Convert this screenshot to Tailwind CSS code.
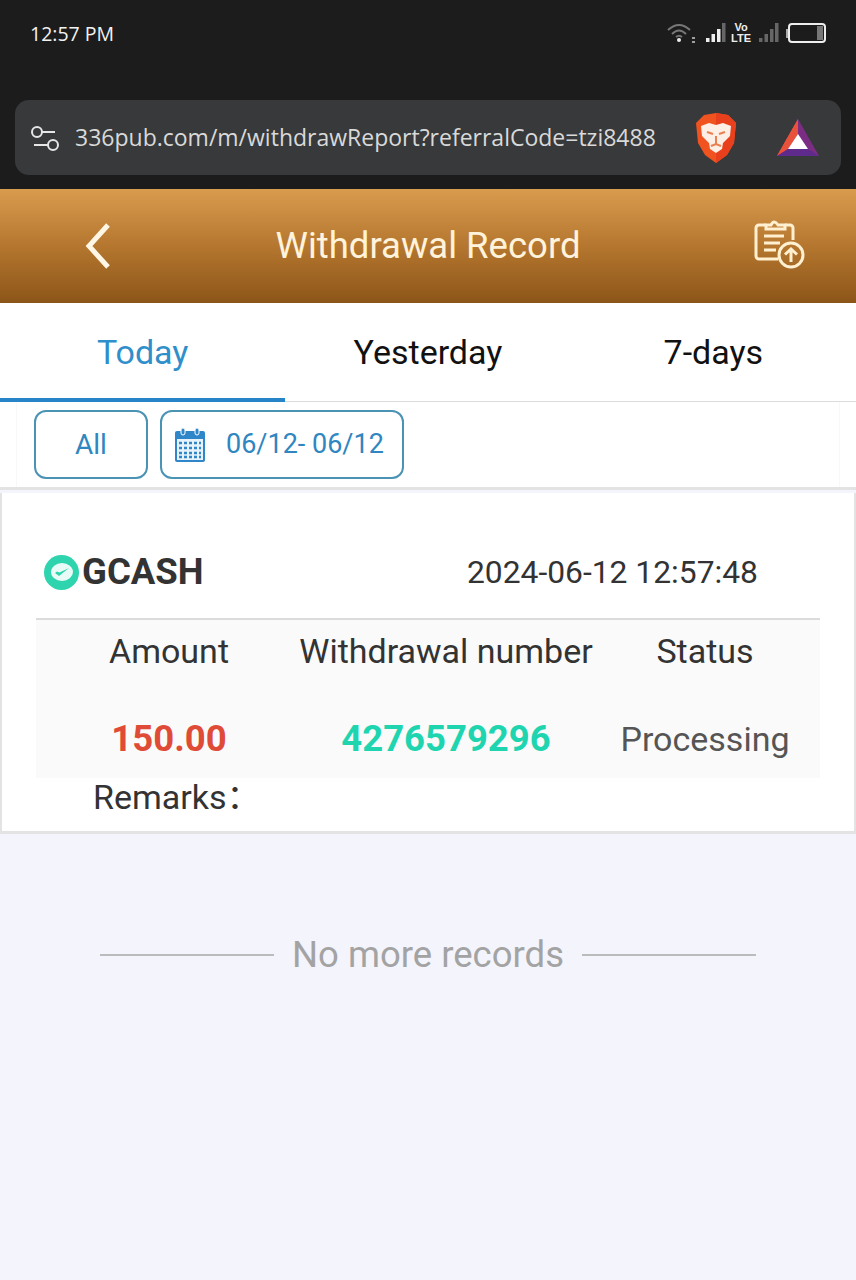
<!DOCTYPE html>
<html lang="en">
<head>
  <meta charset="UTF-8" />
  <title>Withdrawal Record</title>
  <script src="https://cdn.jsdelivr.net/npm/@tailwindcss/browser@4"></script>
</head>
<body class="bg-[#f4f4fc] font-['Roboto','Noto_Sans_CJK_SC',sans-serif] w-[856px] h-[1280px] overflow-hidden">

  <!-- browser chrome -->
  <div class="bg-[#1c1c1c] h-[189px] px-[15px] flex flex-col">
    <div class="h-[100px] flex justify-between pt-[22px]">
      <span class="text-[19.500px] leading-[24px] text-[#f2f2f2] font-['Open_Sans',sans-serif] pl-[15px]">12:57 PM</span>
      <div class="flex items-start pr-[15px]">
        <svg width="30" height="22" viewBox="0 0 30 22" fill="none" stroke="#777" stroke-width="2">
          <path d="M1 8 Q12 -2 23 8" /><path d="M5 12 Q12 5 19 12" /><path d="M9 15 Q12 12.500 15 15" />
          <circle cx="12" cy="18" r="2" fill="#eee" stroke="none" />
          <path d="M25 16h3M25 20h3" stroke="#ccc" stroke-width="1.500" />
        </svg>
        <svg width="22" height="22" viewBox="0 0 22 22" class="ml-[8px]">
          <rect x="1" y="16" width="3.500" height="4" fill="#eee" /><rect x="6.500" y="12" width="3.500" height="8" fill="#eee" /><rect x="12" y="7" width="3.500" height="13" fill="#eee" /><rect x="17" y="1" width="3.500" height="19" fill="#666" />
        </svg>
        <div class="ml-[4px] flex flex-col items-center text-[#eee] text-[11px] leading-[11px] font-bold font-['Liberation_Sans',sans-serif] w-[20px]"><span>Vo</span><span>LTE</span></div>
        <svg width="22" height="22" viewBox="0 0 22 22" class="ml-[7px]">
          <rect x="1" y="16" width="3.500" height="4" fill="#666" /><rect x="6.500" y="12" width="3.500" height="8" fill="#666" /><rect x="12" y="7" width="3.500" height="13" fill="#666" /><rect x="17" y="1" width="3.500" height="19" fill="#666" />
        </svg>
        <div class="ml-[6px] flex items-center mt-[1px]">
          <div class="w-[2px] h-[9px] bg-[#aaa]"></div>
          <div class="w-[38px] h-[20px] border-2 border-[#eee] rounded-[4px] flex justify-end p-[1px]"><div class="w-[6px] bg-[#777]"></div></div>
        </div>
      </div>
    </div>
    <div class="h-[75px] bg-[#38393b] rounded-[14px] flex items-center pl-[15px]">
      <svg width="30" height="28" viewBox="0 0 30 28" fill="none" stroke="#e6e6e6" stroke-width="2" class="shrink-0">
        <circle cx="7" cy="8" r="5" /><path d="M12 8h13" /><circle cx="23" cy="21" r="5" /><path d="M4 21h14" />
      </svg>
      <span class="ml-[15px] text-[#d9d9d9] text-[23px] font-['Open_Sans',sans-serif] w-[590px] shrink-0 whitespace-nowrap">336pub.com/m/withdrawReport?referralCode=tzi8488</span>
      <svg width="42" height="50" viewBox="0 0 42 50" class="ml-[30px] shrink-0">
        <path d="M9 2 L21 0 L33 2 L41 10 L39 30 L32 42 L21 50 L10 42 L3 30 L1 10 Z" fill="#f0531f" />
        <path d="M21 0 L33 2 L41 10 L39 30 L32 42 L21 50 Z" fill="#e8401c" />
        <path d="M6 13 L14 10 L21 12 L28 10 L36 13 L35 23 L28 30 L27 36 L21 40 L15 36 L14 30 L7 23 Z" fill="#fdeee6" />
        <path d="M12 19 L18 21 M30 19 L24 21 M21 23 V31 M16 33 L21 31 L26 33" stroke="#e8804f" stroke-width="2" fill="none" />
      </svg>
      <svg width="44" height="40" viewBox="0 0 44 40" class="ml-[39px] shrink-0">
        <path d="M22 1 L43 38 L1 38 Z" fill="#7b2d84" />
        <path d="M22 1 L12 26 L9 32 L1 38 Z" fill="#f0502e" />
        <path d="M22 1 L22 16 L12 31 L1 38 Z" fill="#e8523a" />
        <path d="M22 16 L32 31 L12 31 Z" fill="#fff" />
        <path d="M1 38 L12 31 L32 31 L43 38 Z" fill="#5e2a8c" />
      </svg>
    </div>
  </div>

  <!-- header -->
  <div class="h-[114px] bg-gradient-to-b from-[#d99c4e] via-[#b5772f] to-[#8c5518] flex items-center justify-between pl-[80px] pr-[50px] relative">
    <svg width="36" height="48" viewBox="0 0 36 48" fill="none" stroke="#fff6e6" stroke-width="5"><path d="M28 3 L9 24 L28 45" /></svg>
    <span class="absolute left-0 right-0 text-center text-[#fff3dc] text-[36.500px]">Withdrawal Record</span>
    <svg width="54" height="54" viewBox="0 0 54 54" fill="none" stroke="#fff0d2" stroke-width="3">
      <path d="M14 6h-7a3 3 0 0 0 -3 3v28a3 3 0 0 0 3 3h19M33 6h5a3 3 0 0 1 3 3v12" />
      <path d="M14 10v-4h5q3 -6 7 0h7v4z" />
      <path d="M12 17h20M12 24h16M12 31h12" />
      <circle cx="39" cy="36" r="12" />
      <path d="M39 43v-13M33 35.500 L39 30 L45 35.500" />
    </svg>
  </div>

  <!-- tabs -->
  <div class="h-[99px] bg-white grid grid-cols-3 border-b border-[#dcdcdc] text-[34px] text-center">
    <div class="text-[#2f8fcb] border-b-[4px] border-[#2585c8] h-[99px] pt-[27px] leading-[44px]">Today</div>
    <div class="text-[#111] pt-[27px] leading-[44px]">Yesterday</div>
    <div class="text-[#111] pt-[27px] leading-[44px]">7-days</div>
  </div>

  <!-- filters -->
  <div class="h-[88px] bg-white border-b-[3px] border-[#e3e3e3] px-[16px]">
    <div class="h-full border-x border-[#f8f8f8] flex gap-[12px] pl-[17px] pt-[8px]">
      <div class="w-[114px] h-[69px] border-2 border-[#4a93b5] rounded-[12px] flex items-center justify-center text-[#2f86c0] text-[28px]">All</div>
      <div class="w-[244px] h-[69px] border-2 border-[#4a93b5] rounded-[12px] flex items-center pl-[12px] text-[#2f86c0] text-[27px]">
        <svg width="32" height="36" viewBox="0 0 32 36">
          <rect x="1" y="4" width="30" height="31" rx="2" fill="#2f86c9" />
          <rect x="3" y="12" width="26" height="21" fill="#e8f2fa" />
          <rect x="7" y="1" width="4" height="7" rx="2" fill="#2f86c9" stroke="#fff" />
          <rect x="21" y="1" width="4" height="7" rx="2" fill="#2f86c9" stroke="#fff" />
          <path d="M5 16h22M5 21h22M5 26h22M5 30h22" stroke="#2f86c9" stroke-width="2.500" stroke-dasharray="3 2" />
        </svg>
        <span class="ml-[20px] whitespace-nowrap">06/12- 06/12</span>
      </div>
    </div>
  </div>

  <!-- record card -->
  <div class="bg-white h-[341px] mt-[3px] border-x-2 border-b-[3px] border-[#e3e3e3] pt-[1px] px-[34px]">
    <div class="flex items-center justify-between pl-[8px] pr-[62px] border-b-2 border-[#dcdcdc] pt-[58px] pb-[26px]">
      <div class="flex items-center gap-[3px]">
        <svg width="35" height="35" viewBox="0 0 35 35">
          <circle cx="17.500" cy="17.500" r="17.500" fill="#2ed4ae" />
          <ellipse cx="18" cy="17" rx="11" ry="9" fill="#e9fbf6" />
          <path d="M11 18 L15 21 L25 13 L15.500 17.500 L13 16.500 Z" fill="#2ed4ae" />
        </svg>
        <span class="text-[#333] text-[36.500px] font-bold leading-[40px]">GCASH</span>
      </div>
      <span class="text-[#333] text-[31.800px] leading-[40px]">2024-06-12 12:57:48</span>
    </div>
    <div class="grid grid-cols-[266px_288px_1fr] bg-[#fafafa] text-center h-[158px]">
      <div class="flex flex-col items-center">
        <span class="text-[#333] text-[34px] leading-[62px]">Amount</span>
        <span class="text-[#df4b36] text-[36.500px] font-bold leading-[44px] mt-[35px]">150.00</span>
      </div>
      <div class="flex flex-col items-center">
        <span class="text-[#333] text-[34px] leading-[62px] whitespace-nowrap">Withdrawal number</span>
        <span class="text-[#1ed5b0] text-[36.500px] font-bold leading-[44px] mt-[35px]">4276579296</span>
      </div>
      <div class="flex flex-col items-center">
        <span class="text-[#333] text-[34px] leading-[62px]">Status</span>
        <span class="text-[#555] text-[34px] leading-[44px] mt-[35px]">Processing</span>
      </div>
    </div>
    <div class="pl-[57px] text-[#333] text-[34px] leading-[38px]">Remarks：</div>
  </div>

  <!-- end of list -->
  <div class="flex items-center justify-center gap-[18px] mt-[88px]">
    <div class="w-[174px] h-[2px] bg-[#bbb]"></div>
    <span class="text-[#a3a3a3] text-[36.500px] leading-[66px]">No more records</span>
    <div class="w-[174px] h-[2px] bg-[#bbb]"></div>
  </div>
</body>
</html>
